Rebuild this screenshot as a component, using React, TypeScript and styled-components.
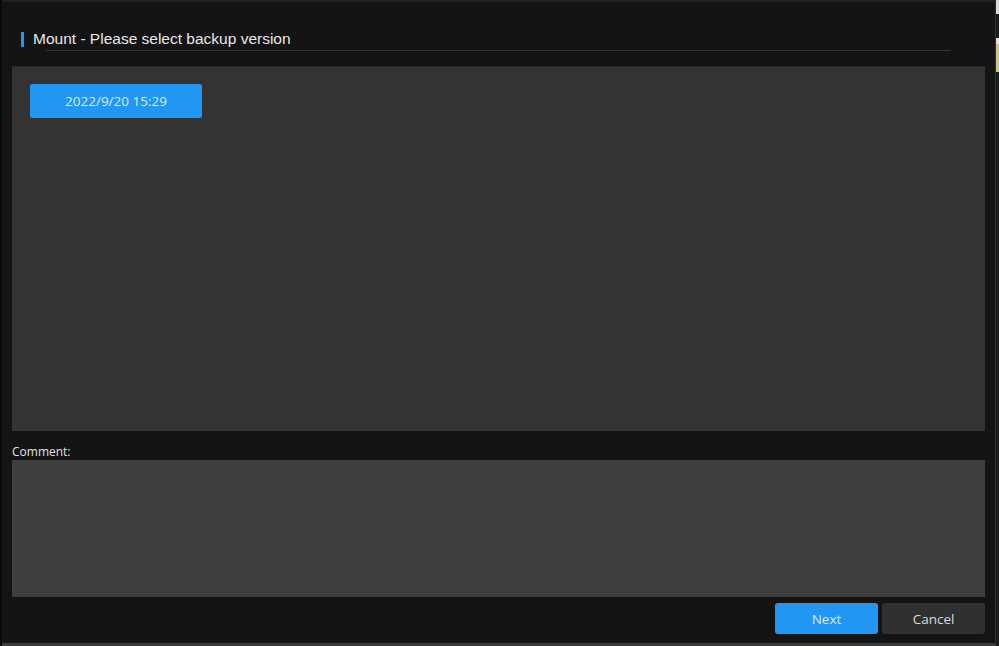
import React from "react";
import styled, { createGlobalStyle } from "styled-components";

const Global = createGlobalStyle`
  html, body { margin: 0; padding: 0; background: #141414; }
  body { width: 999px; height: 646px; overflow: hidden; }
`;

const Screen = styled.div`
  width: 999px;
  height: 646px;
  display: flex;
  background: #141414;
`;

const LeftEdge = styled.div`
  width: 2px;
  background: #0a0a0a;
`;

const Dialog = styled.div`
  flex: 1;
  display: flex;
  flex-direction: column;
  border-top: 2px solid #1f1f1f;
  border-right: 1px solid #2e2e2e;
  border-bottom: 3px solid #3a3a3a;
  padding: 0 10px 0 10px;
  box-sizing: border-box;
  height: 646px;
`;

const Outside = styled.div`
  width: 3px;
  display: flex;
  flex-direction: column;
  background: #1c1c1c;
`;

const OutsideBit = styled.div<{ $h: number; $c: string }>`
  height: ${(p) => p.$h}px;
  background: ${(p) => p.$c};
`;

const TitleRow = styled.div`
  display: flex;
  flex-direction: column;
  padding: 27px 0 0 9px;
  height: 64px;
  box-sizing: border-box;
`;

const TitleLine = styled.div`
  display: flex;
  align-items: center;
  gap: 9px;
  height: 20px;
`;

const Accent = styled.div`
  width: 3px;
  height: 15px;
  background: #2196f3;
`;

const TitleText = styled.div`
  font-family: "Liberation Sans", Arial, sans-serif;
  font-size: 15.5px;
  color: #e8e8e8;
  margin-top: 0px;
`;

const Rule = styled.div`
  margin: 1px 0 0 25px;
  width: 905px;
  height: 1px;
  background: #333333;
  border-radius: 1px;
`;

const Versions = styled.div`
  height: 365px;
  background: #333333;
  border-top: 1px solid #2a2a2a;
  box-sizing: border-box;
  padding: 17px 18px;
  display: flex;
  flex-wrap: wrap;
  align-content: flex-start;
  gap: 8px;
`;

const VersionButton = styled.button`
  width: 172px;
  height: 34px;
  border: none;
  border-radius: 2px;
  background: #2196f3;
  color: #dcecfb;
  font-family: "Open Sans", "Noto Sans", sans-serif;
  font-size: 13.5px;
  cursor: pointer;
`;

const Label = styled.div`
  font-family: "Open Sans", "Noto Sans", sans-serif;
  font-size: 12px;
  color: #e2e2e2;
  margin-top: 12px;
  height: 17px;
  line-height: 17px;
`;

const Comment = styled.textarea`
  height: 137px;
  background: #3e3e3e;
  border: none;
  resize: none;
  outline: none;
  padding: 0;
  display: block;
  color: #ddd;
`;

const Footer = styled.div`
  display: flex;
  justify-content: flex-end;
  gap: 4px;
  padding-top: 6px;
`;

const FooterButton = styled.button<{ $primary?: boolean }>`
  width: 103px;
  height: 31px;
  border: none;
  border-radius: 3px;
  background: ${(p) => (p.$primary ? "#2196f3" : "#303030")};
  color: ${(p) => (p.$primary ? "#dcecfb" : "#dadada")};
  font-family: "Open Sans", "Noto Sans", sans-serif;
  font-size: 13.5px;
  cursor: pointer;
`;

export default function App() {
  return (
    <Screen>
      <Global />
      <LeftEdge />
      <Dialog>
        <TitleRow>
          <TitleLine>
            <Accent />
            <TitleText>Mount - Please select backup version</TitleText>
          </TitleLine>
          <Rule />
        </TitleRow>
        <Versions>
          <VersionButton>2022/9/20 15:29</VersionButton>
        </Versions>
        <Label>Comment:</Label>
        <Comment />
        <Footer>
          <FooterButton $primary>Next</FooterButton>
          <FooterButton>Cancel</FooterButton>
        </Footer>
      </Dialog>
      <Outside>
        <OutsideBit $h={14} $c="#d8d8d8" />
        <OutsideBit $h={24} $c="#1a1a1a" />
        <OutsideBit $h={6} $c="#e0e0e0" />
        <OutsideBit $h={28} $c="#c8c48a" />
        <OutsideBit $h={574} $c="#1c1c1c" />
      </Outside>
    </Screen>
  );
}
